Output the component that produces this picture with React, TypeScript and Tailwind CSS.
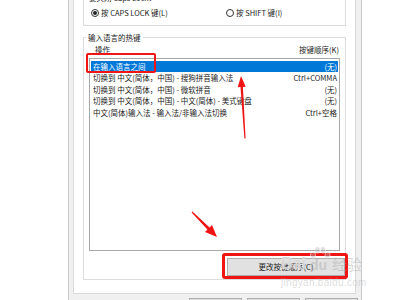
import React from "react";

const rows = [
  { a: "在输入语言之间", k: "(无)", sel: true },
  { a: "切换到 中文(简体，中国) - 搜狗拼音输入法", k: "Ctrl+COMMA" },
  { a: "切换到 中文(简体，中国) - 微软拼音", k: "(无)" },
  { a: "切换到 中文(简体，中国) - 中文(简体) - 美式键盘", k: "(无)" },
  { a: "中文(简体)输入法 - 输入法/非输入法切换", k: "Ctrl+空格" },
];

function Radio({ on }: { on?: boolean }) {
  return (
    <span className="w-[8px] h-[8px] rounded-full border border-[#333] bg-white flex items-center justify-center mr-[2px]">
      {on && <span className="w-[4px] h-[4px] rounded-full bg-[#222]" />}
    </span>
  );
}

export default function App() {
  return (
    <div
      className="relative w-[400px] h-[300px] overflow-hidden bg-white text-[#1a1a1a] text-[7.5px]"
      style={{ fontFamily: '"Noto Sans CJK SC", "Noto Sans", sans-serif' }}
    >
      <div className="ml-[68px] w-[294px] h-[300px] border-l border-r border-[#cbcbcb] bg-[#f0f0f0] pl-[4px] pr-[5px] flex flex-col">
        <div className="w-[283px] h-[294px] shrink-0 bg-white border border-t-0 border-[#d9d9d9] px-[9px] flex flex-col">
          {/* group 1 */}
          <div className="h-[26px] shrink-0 border border-t-0 border-[#dcdcdc] flex flex-col">
            <div className="h-[3px] overflow-hidden pl-[5px]">
              <div className="-mt-[7px] leading-[10px]">要关闭 Caps Lock：</div>
            </div>
            <div className="mt-[5px] h-[10px] flex items-center leading-[10px]">
              <div className="ml-[7px] w-[135px] flex items-center">
                <Radio on />
                <span>按 CAPS LOCK 键(L)</span>
              </div>
              <div className="flex items-center">
                <Radio />
                <span>按 SHIFT 键(I)</span>
              </div>
            </div>
          </div>
          {/* group 2 */}
          <div className="mt-[11px] h-[243px] shrink-0 border border-[#dcdcdc] flex flex-col">
            <div className="-mt-[6px] h-[11px] leading-[11px]">
              <span className="ml-[2px] px-[2px] bg-white">输入语言的热键</span>
            </div>
            <div className="mt-[2px] h-[10px] leading-[10px] flex justify-between pl-[11px] pr-[6px]">
              <span>操作</span>
              <span>按键顺序(K)</span>
            </div>
            <div className="mt-[3px] mx-[5px] h-[193px] border border-[#a8a8a8] bg-white p-[1px] pt-[1.5px]">
              {rows.map((r, i) => (
                <div
                  key={i}
                  className={
                    "h-[11.6px] leading-[11.6px] flex justify-between pl-[2px] pr-[1px] whitespace-nowrap " +
                    (r.sel ? "bg-[#0078d7] text-white" : "")
                  }
                >
                  <span>{r.a}</span>
                  <span>{r.k}</span>
                </div>
              ))}
            </div>
            <div className="mt-[7px] flex justify-end">
              <div className="w-[118px] h-[18px] bg-[#e1e1e1] border border-[#adadad] flex items-center justify-center leading-[10px]">
                更改按键顺序(C)
              </div>
            </div>
          </div>
        </div>
        <div className="mt-[4px] flex justify-end gap-[5px] -mr-[2px]">
          <div className="w-[53px] h-[20px] bg-[#e1e1e1] border border-[#adadad]" />
          <div className="w-[53px] h-[20px] bg-[#e1e1e1] border border-[#adadad]" />
          <div className="w-[53px] h-[20px] bg-[#e1e1e1] border border-[#adadad]" />
        </div>
      </div>

      {/* red highlight boxes */}
      <div className="absolute left-[86px] top-[53px] w-[70px] h-[20px] border-[2.5px] border-[#f01414] rounded-[2px]" />
      <div className="absolute left-[222px] top-[253px] w-[126px] h-[26px] border-[3px] border-[#f01414] rounded-[3px]" />

      {/* arrows */}
      <svg className="absolute left-0 top-0" width="400" height="300" viewBox="0 0 400 300">
        <polygon
          fill="#f01414"
          points="244.4,138.5 240.5,87.1 237.7,87.3 241,76 245.7,86.7 242.9,86.9 245.6,138.5"
        />
        <polygon
          fill="#f01414"
          points="191.6,212.4 207.4,229.6 205,232 217,237 212,225 209.6,227.4 192.4,211.6"
        />
      </svg>

      {/* watermark */}
      <div className="absolute left-[281px] top-[246px] flex flex-col items-start pointer-events-none">
        <div className="flex items-end h-[26px]">
          <span
            className="text-[16px] font-bold leading-[16px] text-[rgba(170,170,170,0.45)]"
            style={{ fontFamily: '"Liberation Sans", sans-serif', textShadow: "0 0 1px #fff" }}
          >
            Bai
          </span>
          <span className="relative w-[24px] h-[26px] ml-[2px]">
            <svg className="absolute left-[1px] top-0" width="22" height="14" viewBox="0 0 22 14">
              <g fill="rgba(175,175,175,0.4)" stroke="rgba(255,255,255,0.8)" strokeWidth="0.6">
                <ellipse cx="4" cy="9" rx="2.6" ry="3" />
                <ellipse cx="8.5" cy="4" rx="2.6" ry="3.2" />
                <ellipse cx="14" cy="4" rx="2.6" ry="3.2" />
                <ellipse cx="18.5" cy="9" rx="2.6" ry="3" />
              </g>
            </svg>
            <span
              className="absolute left-[2px] bottom-[0px] text-[14px] font-bold leading-[14px] text-[rgba(170,170,170,0.45)]"
              style={{ fontFamily: '"Liberation Sans", sans-serif' }}
            >
              du
            </span>
          </span>
          <span className="text-[15px] leading-[16px] text-[rgba(170,170,170,0.45)]">经验</span>
        </div>
        <div
          className="mt-[6px] text-[10px] leading-[10px] tracking-[0.3px] text-[rgba(180,180,180,0.45)]"
          style={{ fontFamily: '"Liberation Sans", sans-serif' }}
        >
          jingyan.baidu.com
        </div>
      </div>
    </div>
  );
}
